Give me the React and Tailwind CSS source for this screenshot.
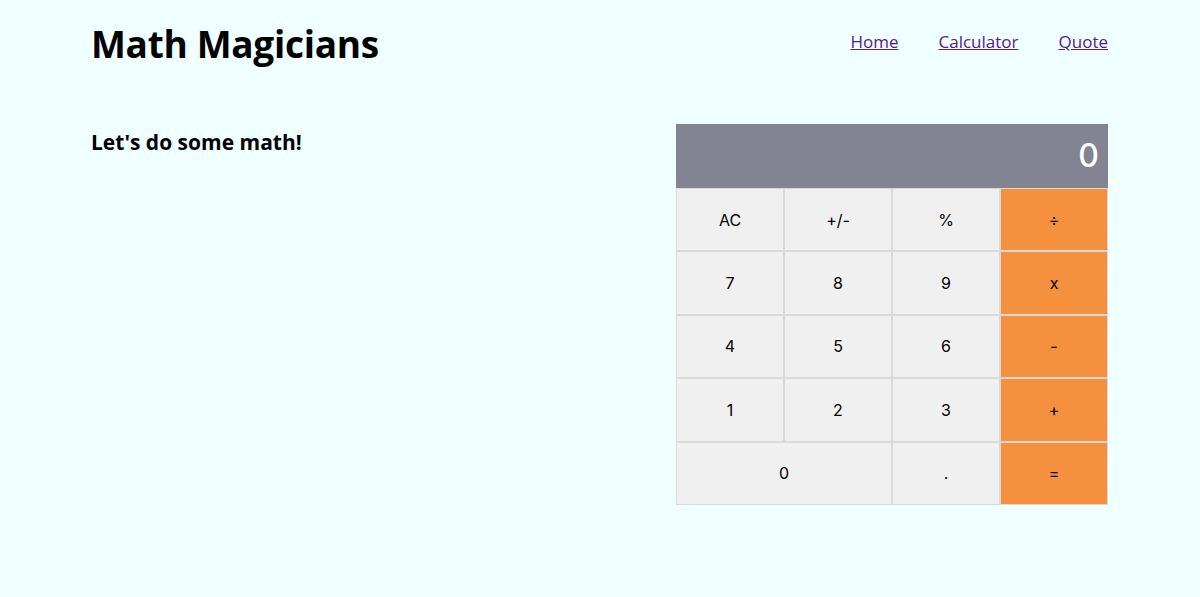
import React from "react";

const rows = [
  ["AC", "+/-", "%", "÷"],
  ["7", "8", "9", "x"],
  ["4", "5", "6", "-"],
  ["1", "2", "3", "+"],
];

function Btn({ label, orange, wide }) {
  return (
    <button
      className={
        "h-[63.4px] border border-[#d9d9d9] flex items-center justify-center text-[16px] text-black " +
        (orange ? "bg-[#f5913e] " : "bg-[#f0f0f0] ") +
        (wide ? "col-span-2" : "")
      }
    >
      {label}
    </button>
  );
}

export default function App() {
  return (
    <div className="min-h-[597px] bg-[#f0ffff] pl-[91px] pr-[92px] font-['Open_Sans',sans-serif] text-black">
      <header className="flex items-center justify-between pt-[18px]">
        <h1 className="text-[37px] font-bold leading-[52px] tracking-[-0.3px]">Math Magicians</h1>
        <nav className="flex gap-[40px] text-[17px] font-medium -mt-[4px]">
          <a href="#" className="text-[#551a8b] underline">Home</a>
          <a href="#" className="text-[#551a8b] underline">Calculator</a>
          <a href="#" className="text-[#551a8b] underline">Quote</a>
        </nav>
      </header>
      <main className="flex justify-between mt-[54px]">
        <h2 className="text-[21px] font-bold mt-[3px] leading-[30px]">Let's do some math!</h2>
        <div className="w-[432px] font-['Inter',sans-serif]">
          <div className="h-[64px] bg-[#828492] flex items-center justify-end pr-[9px] text-white text-[32px] font-medium">
            0
          </div>
          <div className="grid grid-cols-4">
            {rows.map((r) =>
              r.map((l, i) => <Btn key={l} label={l} orange={i === 3} />)
            )}
            <Btn label="0" wide />
            <Btn label="." />
            <Btn label="=" orange />
          </div>
        </div>
      </main>
    </div>
  );
}
